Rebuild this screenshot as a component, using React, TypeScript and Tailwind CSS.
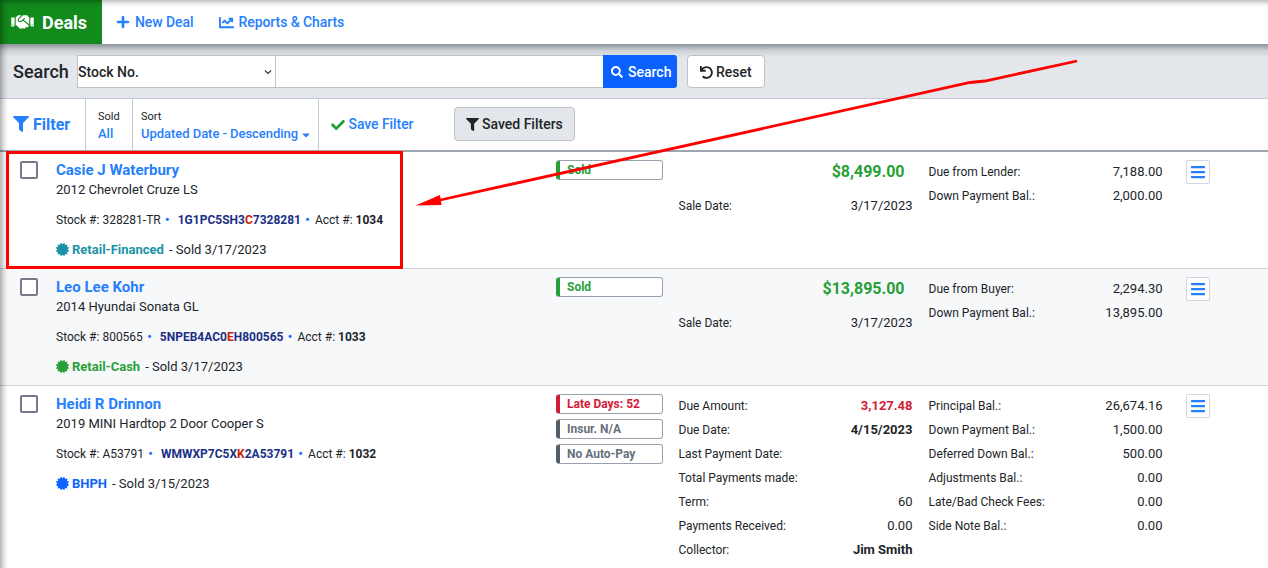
import { FaBars, FaCaretDown, FaCertificate, FaChartLine, FaCheck, FaFilter, FaHandshake, FaPlus, FaSearch, FaUndo } from "react-icons/fa";

interface Line {
  label: string;
  value: string;
  className?: string;
}

interface Deal {
  name: string;
  vehicle: string;
  stock: string;
  // vin split around the highlighted model-year character
  vin: [string, string, string];
  acct: string;
  type: string;
  typeColor: string;
  sold: string;
  badges: { text: string; bar: string; color: string }[];
  total?: string;
  left: Line[];
  right: Line[];
}

const SOLD_BADGE = { text: "Sold", bar: "bg-[#28a038]", color: "text-[#28a038]" };

const DEALS: Deal[] = [
  {
    name: "Casie J Waterbury",
    vehicle: "2012 Chevrolet Cruze LS",
    stock: "328281-TR",
    vin: ["1G1PC5SH3", "C", "7328281"],
    acct: "1034",
    type: "Retail-Financed",
    typeColor: "text-[#1a92a9]",
    sold: "3/17/2023",
    badges: [SOLD_BADGE],
    total: "$8,499.00",
    left: [{ label: "Sale Date:", value: "3/17/2023" }],
    right: [
      { label: "Due from Lender:", value: "7,188.00" },
      { label: "Down Payment Bal.:", value: "2,000.00" },
    ],
  },
  {
    name: "Leo Lee Kohr",
    vehicle: "2014 Hyundai Sonata GL",
    stock: "800565",
    vin: ["5NPEB4AC0", "E", "H800565"],
    acct: "1033",
    type: "Retail-Cash",
    typeColor: "text-[#28a038]",
    sold: "3/17/2023",
    badges: [SOLD_BADGE],
    total: "$13,895.00",
    left: [{ label: "Sale Date:", value: "3/17/2023" }],
    right: [
      { label: "Due from Buyer:", value: "2,294.30" },
      { label: "Down Payment Bal.:", value: "13,895.00" },
    ],
  },
  {
    name: "Heidi R Drinnon",
    vehicle: "2019 MINI Hardtop 2 Door Cooper S",
    stock: "A53791",
    vin: ["WMWXP7C5X", "K", "2A53791"],
    acct: "1032",
    type: "BHPH",
    typeColor: "text-[#0d63fd]",
    sold: "3/15/2023",
    badges: [
      { text: "Late Days: 52", bar: "bg-[#d41b36]", color: "text-[#d41b36]" },
      { text: "Insur. N/A", bar: "bg-[#555e67]", color: "text-[#66707a]" },
      { text: "No Auto-Pay", bar: "bg-[#555e67]", color: "text-[#66707a]" },
    ],
    left: [
      { label: "Due Amount:", value: "3,127.48", className: "font-bold text-[#d41b36]" },
      { label: "Due Date:", value: "4/15/2023", className: "font-bold" },
      { label: "Last Payment Date:", value: "" },
      { label: "Total Payments made:", value: "" },
      { label: "Term:", value: "60" },
      { label: "Payments Received:", value: "0.00" },
      { label: "Collector:", value: "Jim Smith", className: "font-bold" },
    ],
    right: [
      { label: "Principal Bal.:", value: "26,674.16" },
      { label: "Down Payment Bal.:", value: "1,500.00" },
      { label: "Deferred Down Bal.:", value: "500.00" },
      { label: "Adjustments Bal.:", value: "0.00" },
      { label: "Late/Bad Check Fees:", value: "0.00" },
      { label: "Side Note Bal.:", value: "0.00" },
    ],
  },
];

function Lines({ items }: { items: Line[] }) {
  return (
    <dl>
      {items.map((l) => (
        <div key={l.label} className="flex h-6 items-center justify-between">
          <dt className="text-[12px]">{l.label}</dt>
          <dd className={`text-[13px] ${l.className ?? ""}`}>{l.value}</dd>
        </div>
      ))}
    </dl>
  );
}

function Dot() {
  return <span className="w-[5px] text-center font-black text-[#1a73ff]">•</span>;
}

function DealRow({ deal }: { deal: Deal }) {
  return (
    <div className="flex min-h-[117px] shrink-0 items-start whitespace-nowrap border-b border-[#d0d3d7] last:min-h-[200px] even:bg-[#f7f8fa]">
      <div className="w-[56px] shrink-0 pl-5 pt-[9px]">
        <div className="size-[18px] rounded-[2px] border-2 border-[#7b788c] bg-white" />
      </div>

      <div className="w-[500px] shrink-0">
        <div className="mt-[8px] text-[15px] leading-5 font-bold text-[#2680fc]">{deal.name}</div>
        <div className="text-[13px] leading-[19px]">{deal.vehicle}</div>
        <div className="mt-[11px] flex text-[12px] leading-5">
          <span className="mr-1">Stock #: {deal.stock}</span>
          <Dot />
          <span className="mr-1 ml-2 font-bold text-[#1b2f87]">
            {deal.vin[0]}
            <span className="text-[#cc2200]">{deal.vin[1]}</span>
            {deal.vin[2]}
          </span>
          <Dot />
          <span className="ml-[5px]">
            Acct #: <b>{deal.acct}</b>
          </span>
        </div>
        <div className="mt-[10px] flex items-center text-[13px] leading-5">
          <FaCertificate className={`mr-[3px] mb-[2px] size-[13px] ${deal.typeColor}`} />
          <b className={deal.typeColor}>{deal.type}</b>
          <span className="ml-[5px]">- Sold {deal.sold}</span>
        </div>
      </div>

      <div className="mt-2 flex w-[107px] shrink-0 flex-col gap-[5px]">
        {deal.badges.map((b) => (
          <div key={b.text} className="flex h-5 overflow-hidden rounded-[3px] border border-l-0 border-[#98a1ad] bg-white">
            <span className={`w-1 ${b.bar}`} />
            <span className={`pl-[7px] text-[12px] leading-[18px] font-bold ${b.color}`}>{b.text}</span>
          </div>
        ))}
      </div>

      <div className="ml-[15.5px] w-[234px] shrink-0 pt-2">
        {deal.total && (
          <div className="mb-[10px] pr-2 text-right text-[16px] leading-6 font-bold text-[#28a038]">{deal.total}</div>
        )}
        <Lines items={deal.left} />
      </div>

      <div className="ml-4 w-[234px] shrink-0 pt-2">
        <Lines items={deal.right} />
      </div>

      <button className="mt-2 ml-[23.5px] flex size-6 items-center rounded-[1px] border border-[#d3d6dc] bg-white pl-[3px]">
        <FaBars className="size-4 text-[#2680fc]" />
      </button>
    </div>
  );
}

export default function App() {
  return (
    <div className="relative flex h-[568px] w-[1268px] flex-col overflow-hidden bg-white font-[Roboto,sans-serif] text-[#212529]">
      <nav className="flex h-11 shrink-0 items-center bg-white text-[14px] font-medium tracking-[-0.005em] text-[#2680fc]">
        <div className="flex h-full w-[102px] items-center bg-[#128a1c] pl-[11px] text-[18px] font-bold tracking-normal text-white">
          <FaHandshake className="mr-2 h-[18px] w-[23px]" />
          Deals
        </div>
        <a className="ml-[14px] flex items-center">
          <FaPlus className="mr-[5px] size-[14px]" />
          New Deal
        </a>
        <a className="ml-[25px] flex items-center">
          <FaChartLine className="mr-[5px] size-[15px]" />
          Reports &amp; Charts
        </a>
      </nav>

      <div className="flex h-[55px] shrink-0 items-center border-b border-[#c3c9d2] bg-[#e3e6eb] bg-linear-to-b from-[#8e939b] via-[#cdd0d5] via-12% to-[#e3e6eb] to-25% pl-[13px]">
        <span className="w-[64px] text-[18px] font-medium">Search</span>
        <div className="flex h-[33px] w-[199px] items-center justify-between border border-[#bfc1c4] bg-white pt-[2px] text-[14px] font-medium">
          Stock No.
          <svg className="mr-[3px] h-2 w-2" viewBox="0 0 8 8" fill="none" stroke="#333" strokeWidth="1.2">
            <path d="M1 2.5 4 5.5 7 2.5" />
          </svg>
        </div>
        <div className="h-[33px] w-[327px] border-y border-[#bfc1c4] bg-white" />
        <button className="flex h-[33px] w-[74px] items-center rounded-r-[3px] bg-[#0a61ff] pt-[2px] pl-2 text-[14px] font-medium text-white">
          <FaSearch className="mr-[5px] size-[12px]" />
          Search
        </button>
        <button className="ml-[10px] flex h-[33px] w-[78px] items-center rounded-[4px] border border-[#bfc1c4] bg-white pt-[2px] pl-3 text-[14px] font-medium">
          <FaUndo className="mr-[3px] size-[13px]" />
          Reset
        </button>
      </div>

      <div className="flex h-[53px] shrink-0 items-stretch whitespace-nowrap border-b-2 border-[#9ea5af] text-[14px] font-medium text-[#2680fc]">
        <div className="flex w-[86px] items-center border-r border-[#c3c9d2] pl-[13px] text-[16px] font-bold">
          <FaFilter className="mr-1 mb-px size-4" />
          Filter
        </div>
        <div className="flex w-[47px] flex-col justify-center border-r border-[#c3c9d2] pl-3">
          <span className="text-[11px] leading-[17px] font-normal text-[#212529]">Sold</span>
          <span className="text-[13px] leading-[17px]">All</span>
        </div>
        <div className="flex w-[186px] flex-col justify-center border-r border-[#c3c9d2] pl-2">
          <span className="text-[11px] leading-[17px] font-normal text-[#212529]">Sort</span>
          <span className="flex items-center text-[13px] leading-[17px] tracking-[-0.003em]">
            Updated Date - Descending
            <FaCaretDown className="mt-[3px] ml-[2px] size-[12px]" />
          </span>
        </div>
        <div className="flex w-[135px] items-center pl-3">
          <FaCheck className="mr-[3.5px] size-[14px] text-[#28a038]" />
          <span className="tracking-[-0.005em]">Save Filter</span>
        </div>
        <button className="mt-2 flex h-[34px] w-[121px] items-center rounded-[4px] border border-[#bfc1c4] bg-[#e3e6eb] pl-[11px] text-[14px] font-medium text-[#212529]">
          <FaFilter className="mr-[3px] size-[13px]" />
          Saved Filters
        </button>
      </div>

      <div className="flex flex-col">
        {DEALS.map((deal) => (
          <DealRow key={deal.acct} deal={deal} />
        ))}
      </div>

      {/* shade along the left edge and top */}
      <div className="pointer-events-none absolute inset-0 shadow-[inset_5px_4px_6px_-3px_rgba(0,0,0,0.4)]" />

      {/* callout */}
      <div className="pointer-events-none absolute top-[151px] left-[6px] h-[118px] w-[397px] border-3 border-[#fe0000]" />
      <svg className="pointer-events-none absolute inset-0" width="1268" height="568" fill="none">
        <path d="M1077 61 985 81 970 82.5 438 200.5" stroke="#fe0000" strokeWidth="2.8" />
        <path d="M415.500 205.500 440 195 441.500 205Z" fill="#fe0000" />
      </svg>
    </div>
  );
}
